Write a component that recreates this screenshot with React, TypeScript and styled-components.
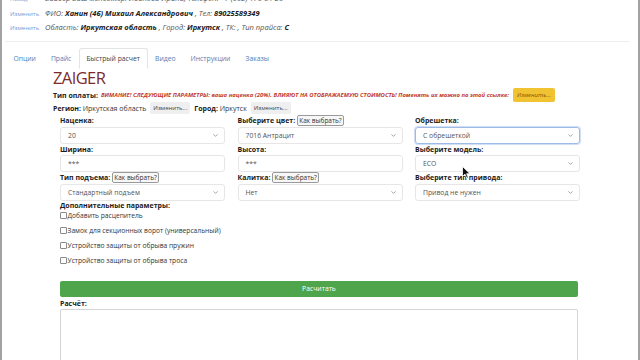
import React from "react"
import styled, { createGlobalStyle, css } from "styled-components"
import { ChevronDown } from "lucide-react"

const GlobalStyle = createGlobalStyle`
  html, body {
    margin: 0;
    padding: 0;
    background: #fff;
    overflow: hidden;
  }
  body {
    font-family: "Open Sans", "Noto Sans", sans-serif;
    color: #222;
  }
`

interface SelectField {
  label: string
  value: string
  help?: boolean
  focused?: boolean
  input?: boolean
}

const columns: SelectField[][] = [
  [
    { label: "Наценка:", value: "20" },
    { label: "Ширина:", value: "***", input: true },
    { label: "Тип подъема:", value: "Стандартный подъем", help: true },
  ],
  [
    { label: "Выберите цвет:", value: "7016 Антрацит", help: true },
    { label: "Высота:", value: "***", input: true },
    { label: "Калитка:", value: "Нет", help: true },
  ],
  [
    { label: "Обрешетка:", value: "С обрешеткой", focused: true },
    { label: "Выберите модель:", value: "ECO" },
    { label: "Выберите тип привода:", value: "Привод не нужен" },
  ],
]

const extras = [
  "Добавить расцепитель",
  "Замок для секционных ворот (универсальный)",
  "Устройство защиты от обрыва пружин",
  "Устройство защиты от обрыва троса",
]

const tabs = ["Опции", "Прайс", "Быстрый расчет", "Видео", "Инструкции", "Заказы"]

const App: React.FC = () => {
  return (
    <Frame>
      <GlobalStyle />
      <Header>
        <InfoRow>
          <EditLink>Назад</EditLink>
          <InfoText>Вайбер   Ваш менеджер: Иванова Ирина, Телефон: +7 (902) 176-84-20</InfoText>
        </InfoRow>
        <InfoRow>
          <EditLink>Изменить</EditLink>
          <InfoText>
            ФИО: <b>Ханин (46) Михаил Александрович</b> , Тел: <b>89025589349</b>
          </InfoText>
        </InfoRow>
        <InfoRow>
          <EditLink>Изменить</EditLink>
          <InfoText>
            Область: <b>Иркутская область</b> , Город: <b>Иркутск</b> , ТК: , Тип прайса: <b>С</b>
          </InfoText>
        </InfoRow>
      </Header>
      <Divider />
      <Tabs>
        {tabs.map((t) => (
          <Tab key={t} $active={t === "Быстрый расчет"}>
            {t}
          </Tab>
        ))}
      </Tabs>
      <Main>
        <Title>ZAIGER</Title>
        <PayRow>
          <b>Тип оплаты:</b>
          <Warning>
            ВИМАНИЕ! СЛЕДУЮЩИЕ ПАРАМЕТРЫ: ваша наценка (20%), ВЛИЯЮТ НА ОТОБРАЖАЕМУЮ СТОИМОСТЬ! Поменять их можно по этой ссылке:
          </Warning>
          <YellowButton>Изменить...</YellowButton>
        </PayRow>
        <RegionRow>
          <b>Регион:</b>&nbsp;Иркутская область
          <GrayButton>Изменить...</GrayButton>
          <b>Город:</b>&nbsp;Иркутск
          <GrayButton>Изменить...</GrayButton>
        </RegionRow>
        <Body>
          <Grid>
            {columns.map((col, i) => (
              <Column key={i}>
                {col.map((f) => (
                  <Field key={f.label}>
                    <Label>
                      {f.label}
                      {f.help && <HelpButton>Как выбрать?</HelpButton>}
                    </Label>
                    <Control $focused={f.focused}>
                      <span>{f.value}</span>
                      {!f.input && <ChevronDown size={7} color="#666" strokeWidth={2} />}
                    </Control>
                  </Field>
                ))}
              </Column>
            ))}
          </Grid>
          <ExtraLabel>Дополнительные параметры:</ExtraLabel>
          {extras.map((e) => (
            <CheckRow key={e}>
              <Box />
              {e}
            </CheckRow>
          ))}
          <GreenButton>Расчитать</GreenButton>
          <Label>Расчёт:</Label>
          <Result />
        </Body>
      </Main>
      <Cursor width="9" height="13" viewBox="0 0 9 13">
        <path d="M0.5 0.5 L0.5 10.5 L3 8.2 L4.8 12.2 L6.3 11.5 L4.6 7.7 L8 7.7 Z" fill="#111" stroke="#fff" strokeWidth="0.8" />
      </Cursor>
    </Frame>
  )
}

export default App

const Frame = styled.div`
  position: relative;
  width: 640px;
  height: 360px;
  box-sizing: border-box;
  border-left: 2px solid #a3a3a3;
  border-right: 2px solid #a3a3a3;
  overflow: hidden;
`
const Header = styled.div`
  padding-left: 8px;
  margin-top: -9px;
`
const InfoRow = styled.div`
  display: flex;
  align-items: baseline;
  height: 14px;
  line-height: 14px;
  white-space: nowrap;
  &:first-child {
    height: 15px;
  }
`
const EditLink = styled.span`
  width: 35px;
  flex-shrink: 0;
  font-size: 6px;
  color: #7b9bd3;
`
const InfoText = styled.span`
  font-size: 7.5px;
  font-style: italic;
  color: #555;
  b {
    color: #1c1c1c;
    font-weight: 700;
  }
`
const Divider = styled.div`
  height: 1px;
  background: #eeeeee;
  margin: 7px 8px 0 3px;
`
const Tabs = styled.div`
  display: flex;
  margin-top: 6px;
  padding-left: 4px;
  height: 21px;
`
const Tab = styled.div<{ $active?: boolean }>`
  height: 21px;
  line-height: 19px;
  box-sizing: border-box;
  padding: 0 6.5px;
  font-size: 6.8px;
  color: #4f7fb8;
  border: 1px solid transparent;
  ${(p) =>
    p.$active &&
    css`
      color: #444;
      border-color: #e4e4e4;
      border-bottom-color: #fff;
      border-radius: 3px 3px 0 0;
    `}
`
const Main = styled.div`
  padding-left: 51px;
`
const Title = styled.div`
  font-size: 16.5px;
  line-height: 17px;
  height: 17px;
  color: #7c2b2b;
  font-weight: 500;
  letter-spacing: -0.6px;
`
const PayRow = styled.div`
  display: flex;
  align-items: center;
  height: 14px;
  margin-top: 2px;
  font-size: 7px;
  white-space: nowrap;
`
const Warning = styled.span`
  margin-left: 3px;
  font-size: 5.9px;
  font-style: italic;
  font-weight: 700;
  color: #c23b2e;
`
const YellowButton = styled.span`
  margin-left: 4px;
  height: 14px;
  line-height: 14px;
  padding: 0 4px;
  background: #f1c232;
  border-radius: 2px;
  font-size: 6px;
  font-style: italic;
  color: #8a5300;
`
const RegionRow = styled.div`
  display: flex;
  align-items: center;
  height: 12px;
  font-size: 7px;
  white-space: nowrap;
  color: #333;
  b {
    color: #1c1c1c;
  }
`
const GrayButton = styled.span`
  margin: 0 4px;
  height: 12px;
  line-height: 12px;
  padding: 0 3px;
  background: #efefef;
  border-radius: 2px;
  font-size: 6px;
  color: #444;
`
const Body = styled.div`
  width: 518px;
  margin-left: 7px;
`
const Grid = styled.div`
  display: grid;
  grid-template-columns: repeat(3, 165px);
  column-gap: 12.5px;
  margin-top: 1px;
`
const Column = styled.div`
  display: flex;
  flex-direction: column;
`
const Field = styled.div`
  display: flex;
  flex-direction: column;
  height: 28.5px;
`
const Label = styled.div`
  display: flex;
  align-items: center;
  height: 11.5px;
  font-size: 7px;
  font-weight: 700;
  color: #1c1c1c;
  white-space: nowrap;
`
const HelpButton = styled.span`
  margin-left: 2px;
  height: 11px;
  line-height: 10px;
  box-sizing: border-box;
  padding: 0 1px;
  border: 1px solid #9a9a9a;
  border-radius: 2px;
  background: #f7f7f7;
  font-size: 6.5px;
  font-weight: 400;
  color: #333;
`
const Control = styled.div<{ $focused?: boolean }>`
  display: flex;
  align-items: center;
  justify-content: space-between;
  height: 17px;
  box-sizing: border-box;
  padding: 0 5px 0 7px;
  border: 1px solid #e6e6e6;
  border-radius: 3px;
  font-size: 6.8px;
  color: #555;
  ${(p) =>
    p.$focused &&
    css`
      border-color: #9dbbe6;
      box-shadow: 0 0 0 1px rgba(120, 160, 230, 0.35);
    `}
`
const ExtraLabel = styled(Label)`
  height: 9px;
  margin-top: 0.5px;
`
const CheckRow = styled.div`
  display: flex;
  align-items: center;
  height: 10px;
  margin-bottom: 5.3px;
  font-size: 6.7px;
  color: #333;
`
const Box = styled.span`
  width: 5px;
  height: 5px;
  border: 1px solid #8a8a8a;
  border-radius: 1px;
  margin-right: 0.5px;
`
const GreenButton = styled.div`
  margin-top: 15px;
  height: 16px;
  line-height: 16px;
  text-align: center;
  background: #4ea54c;
  border-radius: 2px;
  color: #fff;
  font-size: 6.8px;
  margin-bottom: 1px;
`
const Result = styled.div`
  height: 60px;
  border: 1px solid #d5d5d5;
  border-radius: 2px;
`
const Cursor = styled.svg`
  position: absolute;
  left: 460px;
  top: 166px;
`
